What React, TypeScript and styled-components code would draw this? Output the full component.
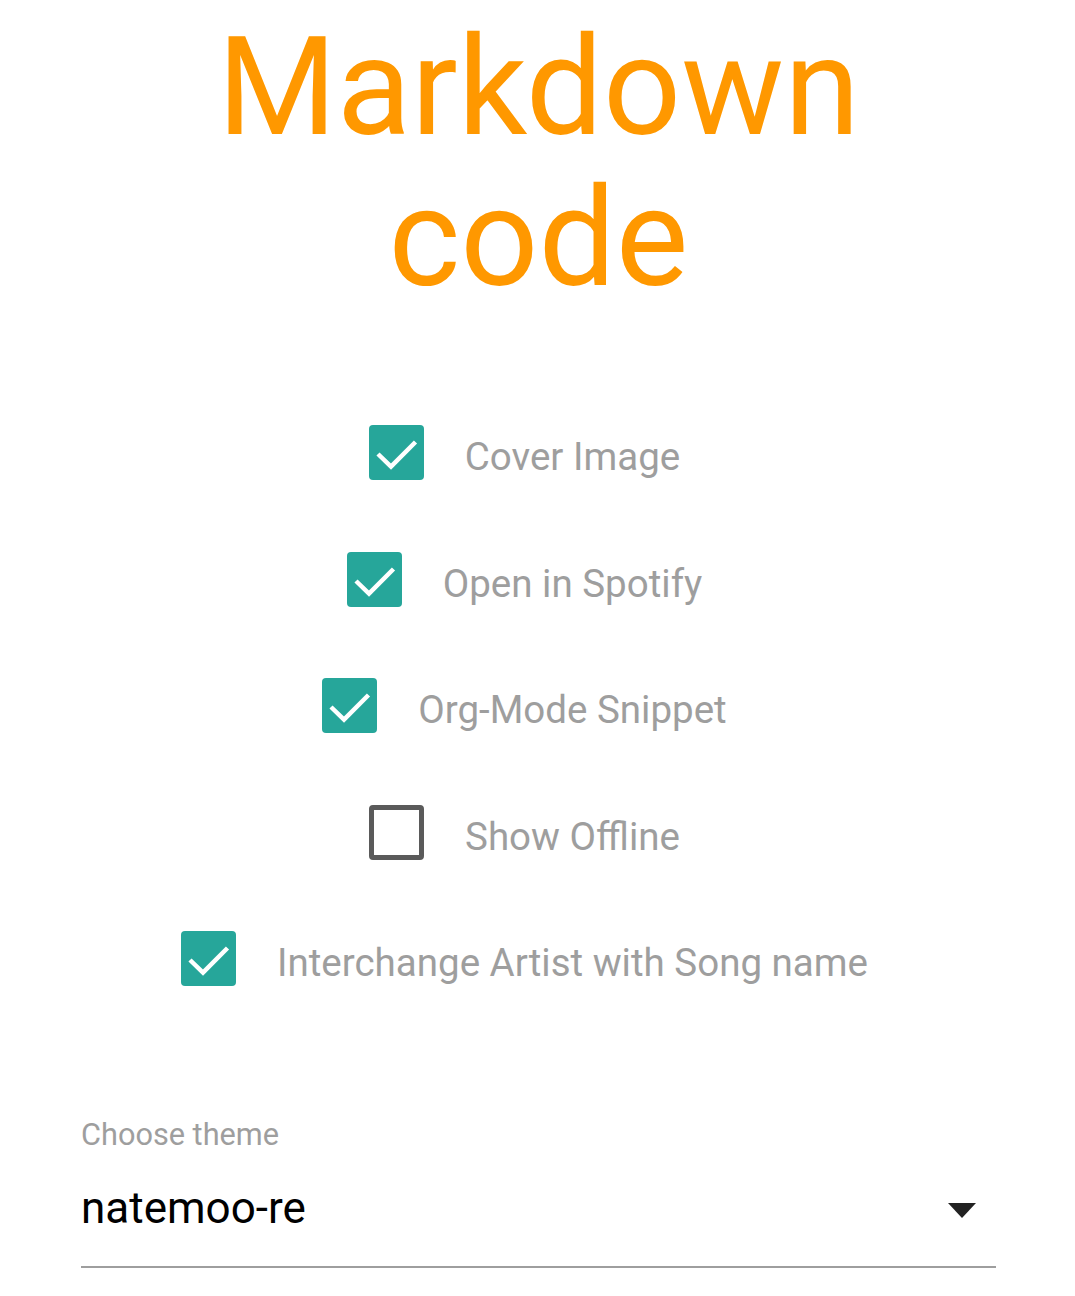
import React from "react";
import styled, { createGlobalStyle } from "styled-components";

const Global = createGlobalStyle`
  html, body { margin: 0; padding: 0; background: #ffffff; }
  body { font-family: Roboto, "Noto Sans", sans-serif; }
`;

const Page = styled.div`
  width: 1075px;
  display: flex;
  flex-direction: column;
  align-items: center;
`;

const Title = styled.h1`
  margin: 12px 0 0 2px;
  font-family: Roboto, sans-serif;
  font-weight: 400;
  font-size: 137px;
  line-height: 151px;
  color: #ff9800;
  text-align: center;
  width: 660px;
`;

const Options = styled.div`
  margin-top: 111px;
  display: flex;
  flex-direction: column;
  align-items: center;
  gap: 71.5px;
  padding-right: 26px;
`;

const Row = styled.label`
  display: flex;
  align-items: center;
  height: 55px;
  cursor: pointer;
`;

const Box = styled.span<{ $checked: boolean }>`
  box-sizing: border-box;
  width: 55px;
  height: 55px;
  border-radius: 4px;
  display: flex;
  background: ${(p) => (p.$checked ? "#26a69a" : "transparent")};
  border: ${(p) => (p.$checked ? "none" : "5px solid #5a5a5a")};
`;

const Label = styled.span`
  margin-left: 41px;
  margin-top: 8px;
  font-size: 38.5px;
  color: #9e9e9e;
  white-space: nowrap;
`;

const Select = styled.div`
  align-self: stretch;
  margin: 131px 79px 0 81px;
  display: flex;
  flex-direction: column;
`;

const SelectLabel = styled.div`
  font-size: 30.7px;
  line-height: 36px;
  color: #9e9e9e;
`;

const SelectField = styled.div`
  margin-top: 34px;
  display: flex;
  align-items: center;
  justify-content: space-between;
  padding-bottom: 37px;
  border-bottom: 2px solid #9e9e9e;
`;

const Value = styled.span`
  font-size: 44px;
  line-height: 42px;
  color: #000;
`;

const Caret = styled.svg`
  width: 28px;
  height: 15px;
  margin: 4px 20px 0 0;
`;

const Check = () => (
  <svg width="55" height="55" viewBox="0 0 55 55">
    <path d="M9 29 L22 41.5 L46.5 17" fill="none" stroke="#fff" strokeWidth="4.5" />
  </svg>
);

const items = [
  { label: "Cover Image", checked: true },
  { label: "Open in Spotify", checked: true },
  { label: "Org-Mode Snippet", checked: true },
  { label: "Show Offline", checked: false },
  { label: "Interchange Artist with Song name", checked: true },
];

export default function App() {
  return (
    <Page>
      <Global />
      <Title>Markdown code</Title>
      <Options>
        {items.map((it) => (
          <Row key={it.label}>
            <Box $checked={it.checked}>{it.checked && <Check />}</Box>
            <Label>{it.label}</Label>
          </Row>
        ))}
      </Options>
      <Select>
        <SelectLabel>Choose theme</SelectLabel>
        <SelectField>
          <Value>natemoo-re</Value>
          <Caret viewBox="0 0 28 15">
            <path d="M0 0 H28 L14 15 Z" fill="#222" />
          </Caret>
        </SelectField>
      </Select>
    </Page>
  );
}
